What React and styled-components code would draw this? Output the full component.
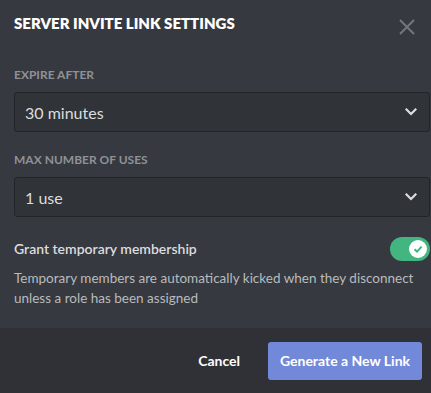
import styled, { createGlobalStyle } from "styled-components";

const GlobalStyle = createGlobalStyle`
  html, body {
    margin: 0;
    padding: 0;
    background: #36393f;
  }
  * {
    box-sizing: border-box;
  }
`;

const Modal = styled.div`
  width: 431px;
  height: 393px;
  background-color: #36393f;
  font-family: Lato, "Open Sans", sans-serif;
  display: flex;
  flex-direction: column;
  overflow: hidden;
`;

const Header = styled.div`
  display: flex;
  justify-content: space-between;
  align-items: flex-start;
  padding: 12px 14px 0 14px;
  height: 48px;
`;

const Title = styled.h2`
  margin: 0;
  margin-top: 1px;
  font-size: 15px;
  line-height: 20px;
  font-weight: 800;
  color: #ffffff;
  text-transform: uppercase;
`;

const CloseButton = styled.button`
  background: none;
  border: none;
  padding: 0;
  margin-top: 6px;
  margin-right: 1px;
  width: 18px;
  height: 18px;
  color: #72767d;
  cursor: pointer;
  display: flex;
  align-items: center;
  justify-content: center;
`;

const Body = styled.div`
  flex: 1;
  padding: 19px 0 0 14px;
  display: flex;
  flex-direction: column;
`;

const Field = styled.div`
  display: flex;
  flex-direction: column;
  margin-bottom: ${({ $gap }) => $gap || 0}px;
`;

const Label = styled.div`
  font-size: 12px;
  font-weight: 700;
  color: #8e9297;
  text-transform: uppercase;
  line-height: 16px;
  margin-bottom: 9px;
`;

const Select = styled.div`
  width: 416px;
  height: 40px;
  background-color: #303338;
  border: 1px solid #222428;
  border-radius: 3px;
  display: flex;
  align-items: center;
  justify-content: space-between;
  padding: 0 12px 0 10px;
  color: #dcddde;
  font-size: 16px;
`;

const ToggleRow = styled.div`
  display: flex;
  align-items: center;
  justify-content: space-between;
  padding-right: 1px;
  margin-bottom: 7px;
`;

const ToggleLabel = styled.div`
  font-size: 14px;
  font-weight: 600;
  color: #dcddde;
  line-height: 20px;
`;

const Switch = styled.div`
  width: 40px;
  height: 24px;
  border-radius: 12px;
  background-color: #43b581;
  display: flex;
  align-items: center;
  justify-content: flex-end;
  padding-right: 3px;
`;

const Knob = styled.div`
  width: 18px;
  height: 18px;
  border-radius: 50%;
  background-color: #ffffff;
  display: flex;
  align-items: center;
  justify-content: center;
`;

const Description = styled.p`
  margin: 0;
  font-size: 13.5px;
  line-height: 20px;
  color: #b9bbbe;
  width: 410px;
`;

const Footer = styled.div`
  height: 65px;
  background-color: #2f3136;
  display: flex;
  align-items: center;
  justify-content: flex-end;
  padding: 0 9px 0 0;
  gap: 28px;
`;

const TextButton = styled.button`
  background: none;
  border: none;
  padding: 0;
  font-family: inherit;
  font-size: 14px;
  font-weight: 700;
  color: #ffffff;
  cursor: pointer;
`;

const PrimaryButton = styled.button`
  width: 154px;
  height: 38px;
  border: none;
  border-radius: 3px;
  background-color: #7289da;
  color: #ffffff;
  font-family: inherit;
  font-size: 14px;
  font-weight: 700;
  cursor: pointer;
`;

const Chevron = () => (
  <svg width="12" height="8" viewBox="0 0 12 8">
    <path
      d="M1.5 1.5 L6 6 L10.5 1.5"
      fill="none"
      stroke="#dcddde"
      strokeWidth="2.2"
      strokeLinecap="square"
    />
  </svg>
);

export default function App() {
  return (
    <>
      <GlobalStyle />
      <Modal>
        <Header>
          <Title>Server Invite Link Settings</Title>
          <CloseButton aria-label="Close">
            <svg width="16" height="16" viewBox="0 0 16 16">
              <path
                d="M1 1 L15 15 M15 1 L1 15"
                stroke="currentColor"
                strokeWidth="2"
              />
            </svg>
          </CloseButton>
        </Header>
        <Body>
          <Field $gap={20}>
            <Label>Expire After</Label>
            <Select>
              <span>30 minutes</span>
              <Chevron />
            </Select>
          </Field>
          <Field $gap={20}>
            <Label>Max Number of Uses</Label>
            <Select>
              <span>1 use</span>
              <Chevron />
            </Select>
          </Field>
          <ToggleRow>
            <ToggleLabel>Grant temporary membership</ToggleLabel>
            <Switch>
              <Knob>
                <svg width="12" height="12" viewBox="0 0 12 12">
                  <path
                    d="M2.5 6.2 L5 8.6 L9.6 3.6"
                    fill="none"
                    stroke="#43b581"
                    strokeWidth="2"
                  />
                </svg>
              </Knob>
            </Switch>
          </ToggleRow>
          <Description>
            Temporary members are automatically kicked when they disconnect
            unless a role has been assigned
          </Description>
        </Body>
        <Footer>
          <TextButton>Cancel</TextButton>
          <PrimaryButton>Generate a New Link</PrimaryButton>
        </Footer>
      </Modal>
    </>
  );
}
